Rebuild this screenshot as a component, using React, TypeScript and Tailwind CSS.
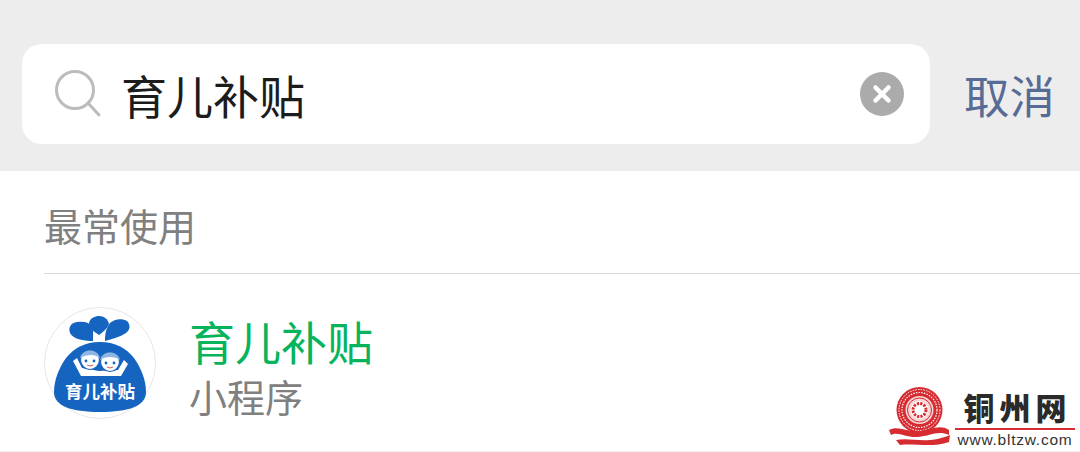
import React from "react";

const CJK = "font-['Noto_Sans_CJK_SC','Noto_Sans',sans-serif]";

function SearchIcon() {
  return (
    <svg width="48" height="48" viewBox="0 0 48 48" fill="none" className="shrink-0">
      <circle cx="21" cy="20" r="18.5" stroke="#bcbcbc" strokeWidth="3" />
      <path d="M34 33 L45 45" stroke="#bcbcbc" strokeWidth="3" strokeLinecap="round" />
    </svg>
  );
}

function ClearIcon() {
  return (
    <svg width="44" height="44" viewBox="0 0 44 44" className="shrink-0">
      <circle cx="22" cy="22" r="22" fill="#ababab" />
      <path d="M15.5 15.5 L28.5 28.5 M28.5 15.5 L15.5 28.5" stroke="#fff" strokeWidth="4.5" strokeLinecap="round" />
    </svg>
  );
}

function AppLogo() {
  return (
    <div className="relative w-[112px] h-[112px] shrink-0 rounded-full border border-[#e6e6e6] bg-white">
      <svg width="110" height="110" viewBox="0 0 110 110" className="absolute left-0 top-0">
        <path d="M48 33 C38 33 28 31 25 25 C23 19 26 15 32 14 C38 13 43 14 46 17 C49 21 48 27 48 33Z" fill="#1565c0" />
        <path d="M54 27 C49 24 44 20 44 15 C45 10 50 8 54 8 C59 8 63 11 64 16 C62 21 58 24 54 27Z" fill="#1565c0" />
        <path d="M60 33 C60 26 61 20 65 15 C69 11 77 10 82 13 C86 17 85 22 81 25 C75 29 67 31 60 33Z" fill="#1565c0" />
        <path d="M55 34 C70 34 81 40 89 50 C96 60 101 72 101 84 C101 98 84 104 55 104 C26 104 9 98 9 84 C9 72 14 60 21 50 C29 40 40 34 55 34Z" fill="#1565c0" />
        <path d="M28 53 L32 50 L37 60 L54 63 L73 62 L79 52 L83 56 L76 68 L36 68Z" fill="#fff" />
        <circle cx="45" cy="52" r="9.5" fill="#fff" stroke="#1565c0" strokeWidth="1.2" />
        <circle cx="65" cy="54" r="9.5" fill="#fff" stroke="#1565c0" strokeWidth="1.2" />
        <path d="M35 50 C37 40 53 40 55 50 C50 46 42 46 35 50Z" fill="#8fb6e3" />
        <path d="M55 52 C57 42 73 42 75 52 C70 48 60 48 55 52Z" fill="#8fb6e3" />
        <circle cx="41" cy="53" r="1.4" fill="#1565c0" />
        <circle cx="49" cy="53" r="1.4" fill="#1565c0" />
        <circle cx="61" cy="55" r="1.4" fill="#1565c0" />
        <circle cx="69" cy="55" r="1.4" fill="#1565c0" />
        <path d="M42 57 Q45 59 48 57 M62 59 Q65 61 68 59" stroke="#e0574f" strokeWidth="1" fill="none" />
      </svg>
      <span className={`absolute left-0 right-0 top-[71px] text-center text-[17.5px] leading-[24px] font-bold text-white ${CJK}`}>
        育儿补贴
      </span>
    </div>
  );
}

function Watermark() {
  return (
    <div className="absolute left-[888px] top-[386px] flex items-start gap-[5px]">
      <svg width="62" height="62" viewBox="0 0 62 62" className="shrink-0">
        <circle cx="31.5" cy="24" r="23" fill="#d62b30" />
        <circle cx="31.5" cy="24" r="20.5" fill="none" stroke="#fff" strokeWidth="1" strokeDasharray="1.5 1.2" />
        <circle cx="31.5" cy="24" r="17.5" fill="none" stroke="#fff" strokeWidth="1.2" strokeDasharray="1.5 1.2" />
        <circle cx="31.5" cy="24" r="14" fill="#f5d5d5" />
        <circle cx="31.5" cy="24" r="12" fill="none" stroke="#d62b30" strokeWidth="1" />
        <circle cx="31.5" cy="24" r="9" fill="#fff" />
        <circle cx="31.5" cy="24" r="6.5" fill="none" stroke="#d62b30" strokeWidth="3" strokeDasharray="2.2 1.2" />
        <circle cx="31.5" cy="24" r="2.8" fill="#fff" />
        <path d="M1 44 C10 39 18 46 32 45 C42 44 52 38 61 44 L61 49 C50 44 42 50 30 51 C18 52 10 45 3 49Z" fill="#d62b30" />
        <path d="M8 54 C24 51 38 59 62 49 L61 56 C44 62 26 57 12 59Z" fill="#d62b30" />
      </svg>
      <div className="flex flex-col items-center w-[120px]">
        <span className={`mt-[2px] text-[31px] leading-[38px] font-black tracking-[5px] pl-[5px] text-[#2a2a2a] ${CJK}`}>铜州网</span>
        <div className="w-full h-[2px] bg-[#d62b30] mt-[2px]" />
        <span className="font-['Liberation_Sans',sans-serif] text-[15.5px] leading-[18px] tracking-[0.75px] text-[#333] mt-[1px]">www.bltzw.com</span>
      </div>
    </div>
  );
}

export default function App() {
  return (
    <div className={`relative w-[1080px] h-[452px] overflow-hidden bg-white ${CJK}`}>
      <header className="h-[171px] bg-[#ededed] pt-[44px] pl-[22px] pr-[25px] flex items-start justify-between">
        <div className="w-[908px] h-[100px] rounded-[20px] bg-white flex items-center pl-[32px] pr-[26px]">
          <SearchIcon />
          <span className="ml-[19px] text-[46px] leading-[60px] text-[#1c1c1c]">育儿补贴</span>
          <div className="ml-auto">
            <ClearIcon />
          </div>
        </div>
        <span className="h-[100px] flex items-center text-[45.5px] leading-[60px] text-[#576b95]">取消</span>
      </header>
      <section className="h-[280px] pl-[44px]">
        <div className="h-[103px] pt-[29px] border-b border-[#d9d9d9]">
          <p className="text-[38px] leading-[50px] text-[#808080]">最常使用</p>
        </div>
        <div className="flex items-start gap-[33px] pt-[33px]">
          <AppLogo />
          <div className="flex flex-col mt-[7px]">
            <span className="text-[46px] leading-[52px] text-[#07b45c]">育儿补贴</span>
            <span className="text-[38px] leading-[46px] mt-[7px] text-[#808080]">小程序</span>
          </div>
        </div>
      </section>
      <div className="h-px bg-[#f0f0f0]" />
      <Watermark />
    </div>
  );
}
